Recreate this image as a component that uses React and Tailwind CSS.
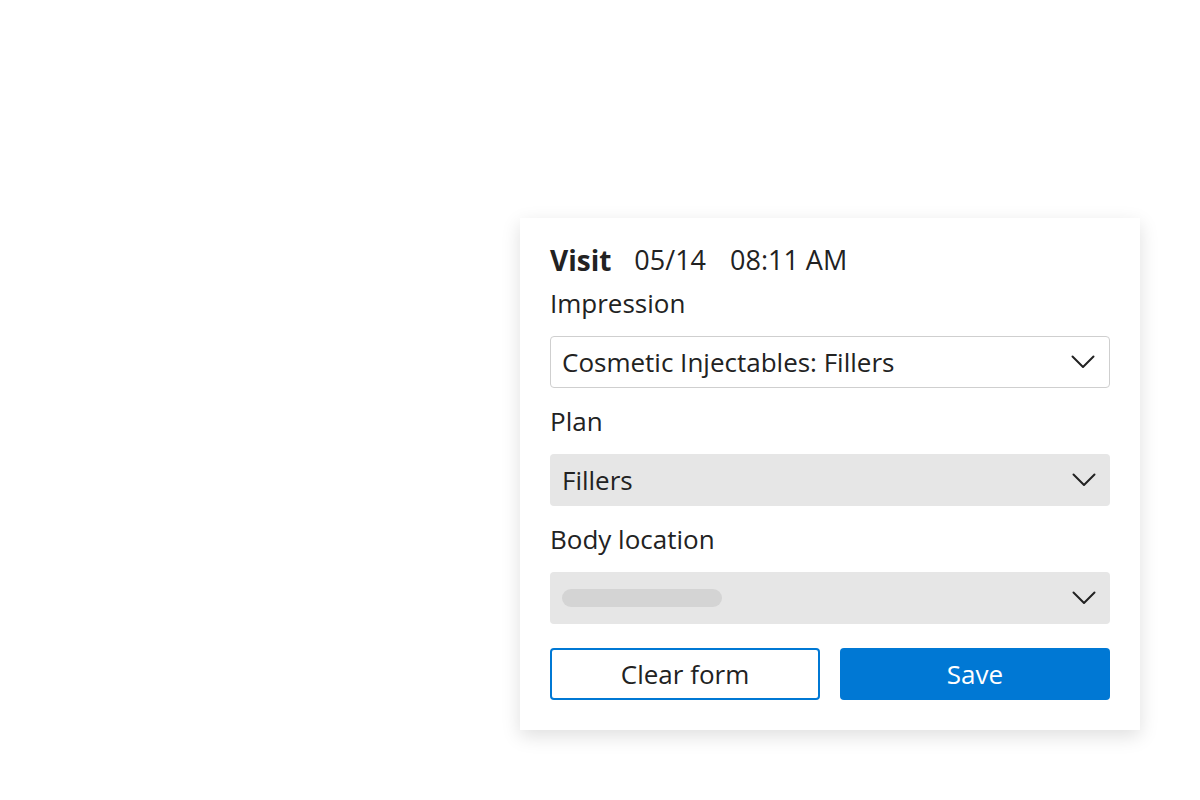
import React from "react";

function Chevron() {
  return (
    <svg width="24" height="14" viewBox="0 0 24 14" fill="none" className="shrink-0">
      <polyline points="1.5,1.5 12,12 22.5,1.5" stroke="#222" strokeWidth="2" strokeLinecap="round" strokeLinejoin="round" />
    </svg>
  );
}

function Select({ children, variant }) {
  const base = "flex h-[52px] w-full items-center justify-between rounded-[4px] pl-3 pr-[14px]";
  const cls =
    variant === "outline"
      ? base + " border border-[#cfcfcf] bg-white pl-[11px]"
      : base + " bg-[#e6e6e6]";
  return (
    <div className={cls}>
      <div className="flex-1 text-[26px] leading-[30px] text-[#222]">{children}</div>
      <Chevron />
    </div>
  );
}

export default function App() {
  return (
    <div
      className="relative h-[800px] w-[1200px] bg-white"
      style={{ fontFamily: "'Open Sans', 'Noto Sans', sans-serif" }}
    >
      <div className="absolute left-[520px] top-[218px] w-[620px] bg-white px-[30px] pb-[30px] pt-[26px] shadow-[0_6px_18px_rgba(0,0,0,0.13)]">
        <div className="flex h-[32px] items-center text-[#222]">
          <span className="text-[28px] font-bold leading-[32px]">Visit</span>
          <span className="ml-[23px] text-[27px] leading-[32px]">05/14</span>
          <span className="ml-[24px] text-[27px] leading-[32px]">08:11 AM</span>
        </div>
        <div className="mt-3 mb-[18px] text-[26px] leading-[30px] text-[#222]">Impression</div>
        <Select variant="outline">Cosmetic Injectables: Fillers</Select>
        <div className="my-[18px] text-[26px] leading-[30px] text-[#222]">Plan</div>
        <Select>Fillers</Select>
        <div className="my-[18px] text-[26px] leading-[30px] text-[#222]">Body location</div>
        <Select>
          <div className="h-[18px] w-[160px] rounded-full bg-[#d4d4d4]" />
        </Select>
        <div className="mt-6 grid grid-cols-2 gap-5">
          <button className="h-[52px] rounded-[4px] border-2 border-[#0078d4] bg-white text-[26px] text-[#222]">
            Clear form
          </button>
          <button className="h-[52px] rounded-[4px] bg-[#0078d4] text-[26px] text-white">Save</button>
        </div>
      </div>
    </div>
  );
}
